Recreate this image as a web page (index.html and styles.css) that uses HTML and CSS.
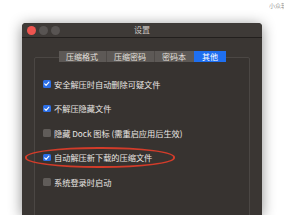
FILE: index.html
```html
<!DOCTYPE html>
<html lang="zh">
<head>
<meta charset="utf-8">
<link rel="stylesheet" href="styles.css">
</head>
<body>
<div class="watermark">小众软件</div>
<div class="window">
  <div class="titlebar">
    <div class="lights">
      <span class="light red"></span>
      <span class="light"></span>
      <span class="light"></span>
    </div>
    <div class="title">设置</div>
  </div>
  <div class="content">
    <div class="tabs">
      <span class="tab">压缩格式</span>
      <span class="tab">压缩密码</span>
      <span class="tab">密码本</span>
      <span class="tab active">其他</span>
    </div>
    <div class="group">
      <div class="row"><span class="cb on"><svg viewBox="0 0 8 8"><path d="M1.8 4.2 L3.3 5.7 L6.3 2.2" fill="none" stroke="#fff" stroke-width="1.2" stroke-linecap="round" stroke-linejoin="round"/></svg></span><span class="label">安全解压时自动删除可疑文件</span></div>
      <div class="row"><span class="cb on"><svg viewBox="0 0 8 8"><path d="M1.8 4.2 L3.3 5.7 L6.3 2.2" fill="none" stroke="#fff" stroke-width="1.2" stroke-linecap="round" stroke-linejoin="round"/></svg></span><span class="label">不解压隐藏文件</span></div>
      <div class="row"><span class="cb"></span><span class="label">隐藏 Dock 图标 (需重启应用后生效)</span></div>
      <div class="row"><span class="cb on"><svg viewBox="0 0 8 8"><path d="M1.8 4.2 L3.3 5.7 L6.3 2.2" fill="none" stroke="#fff" stroke-width="1.2" stroke-linecap="round" stroke-linejoin="round"/></svg></span><span class="label">自动解压新下载的压缩文件</span><span class="ring"></span></div>
      <div class="row"><span class="cb"></span><span class="label">系统登录时启动</span></div>
    </div>
  </div>
</div>
</body>
</html>
```
FILE: styles.css
```css
html, body {
  margin: 0;
  padding: 0;
  background: #ffffff;
  width: 284px;
  height: 215px;
  overflow: hidden;
  font-family: "Noto Sans CJK SC", "Noto Sans", sans-serif;
}
body {
  position: relative;
}
.watermark {
  position: absolute;
  top: 2px;
  right: 0;
  width: 15px;
  overflow: hidden;
  font-size: 6px;
  line-height: 8px;
  color: #9a9a9a;
  white-space: nowrap;
}
.window {
  margin: 23px 0 0 22px;
  width: 240px;
  height: 192px;
  background: #3a3633;
  border-radius: 4px 4px 0 0;
  box-shadow: 0 2px 14px rgba(0, 0, 0, 0.45);
  display: flex;
  flex-direction: column;
}
.titlebar {
  height: 14px;
  background: #3e3a37;
  border-bottom: 1px solid #221f1d;
  border-radius: 4px 4px 0 0;
  position: relative;
  display: flex;
  align-items: center;
  justify-content: center;
}
.lights {
  position: absolute;
  left: 5px;
  top: 3px;
  display: flex;
  gap: 3px;
}
.light {
  width: 9px;
  height: 9px;
  border-radius: 50%;
  background: #585452;
}
.light.red {
  background: #ee5550;
}
.title {
  font-size: 8px;
  color: #cfcac6;
  line-height: 14px;
}
.content {
  padding: 13px 12px 0;
  display: flex;
  flex-direction: column;
}
.tabs {
  display: flex;
  justify-content: center;
  position: relative;
  z-index: 1;
  height: 11px;
}
.tab {
  background: #5d5956;
  color: #e6e2df;
  font-size: 8px;
  line-height: 11px;
  padding: 0 7.5px;
  white-space: nowrap;
}
.tab + .tab {
  border-left: 1px solid #4e4a47;
}
.tab.active {
  background: #1e6ff0;
  color: #ffffff;
  border-left-color: #1e6ff0;
}
.group {
  margin-top: -5.5px;
  height: 150px;
  border: 1px solid #4b4744;
  border-radius: 2px;
  background: #373330;
  padding: 14px 0 0 8px;
  display: flex;
  flex-direction: column;
}
.row {
  height: 24.5px;
  display: flex;
  align-items: center;
  gap: 3.5px;
  position: relative;
}
.cb {
  width: 7.5px;
  height: 7.5px;
  border-radius: 1.5px;
  background: #605c59;
  display: flex;
}
.cb.on {
  background: #2c6fe6;
}
.cb svg {
  width: 7.5px;
  height: 7.5px;
}
.label {
  font-size: 8.2px;
  color: #ebe7e4;
  white-space: nowrap;
}
.ring {
  position: absolute;
  left: -18px;
  top: 2px;
  width: 146px;
  height: 17px;
  border: 2px solid #d23c2a;
  border-radius: 73px / 10px;
}
```
